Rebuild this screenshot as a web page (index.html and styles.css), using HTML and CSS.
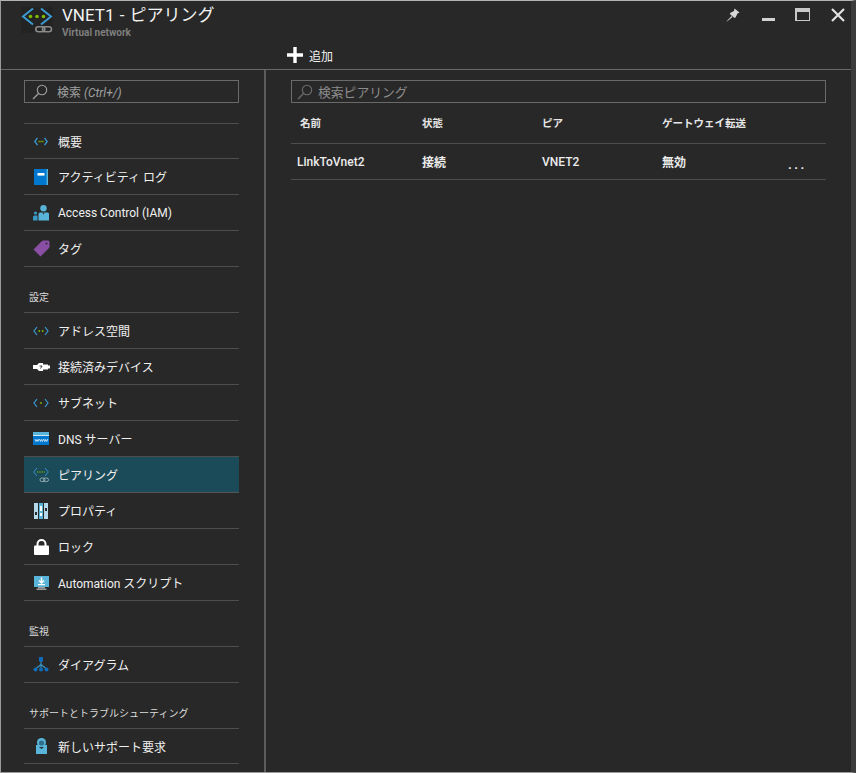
FILE: index.html
```html
<!DOCTYPE html>
<html lang="ja">
<head>
    <meta charset="UTF-8">
    <meta name="viewport" content="width=device-width, initial-scale=1.0">
    <title>VNET1 - ピアリング</title>
    <link rel="stylesheet" href="styles.css">
</head>
<body>

<div class="window">
    <header class="topbar">
        <div class="title-row">
            <div class="logo">
                <svg width="32" height="26" viewBox="0 0 32 26">
                    <path d="M12 1.5 L2 9.5 L12 17.5 M20 1.5 L30 9.5 L20 17.5" fill="none" stroke="#3b9ad2" stroke-width="2"/>
                    <circle cx="9.5" cy="9.5" r="1.8" fill="#7fba00"/>
                    <circle cx="16" cy="9.5" r="1.8" fill="#7fba00"/>
                    <circle cx="22.5" cy="9.5" r="1.8" fill="#7fba00"/>
                    <rect x="14.8" y="19.8" width="9" height="5" rx="2.5" fill="none" stroke="#8a8a8a" stroke-width="1.6"/>
                    <rect x="21.5" y="19.8" width="9" height="5" rx="2.5" fill="none" stroke="#8a8a8a" stroke-width="1.6"/>
                </svg>
            </div>
            <div class="title-text">
                <h1>VNET1 - ピアリング</h1>
                <div class="subtitle">Virtual network</div>
            </div>
            <div class="win-buttons">
                <svg class="pin" width="14" height="14" viewBox="0 0 14 14">
                    <path d="M8.5 0.5 L13.5 4.5 L11.5 5.5 L9.5 9.5 L8.5 10 L3.8 6 L4.5 4.8 L8 3 Z" fill="#d8d8d8"/>
                    <path d="M5.5 8 L0.5 13.5 L1 13.5 L6.5 9 Z" fill="#d8d8d8"/>
                </svg>
                <span class="min"></span>
                <span class="max"></span>
                <svg class="close" width="14" height="14" viewBox="0 0 14 14">
                    <path d="M1 1 L13 13 M13 1 L1 13" stroke="#e0e0e0" stroke-width="2.2"/>
                </svg>
            </div>
        </div>
        <div class="command-row">
            <svg width="16" height="16" viewBox="0 0 16 16">
                <path d="M8 0 V16 M0 8 H16" stroke="#fff" stroke-width="3.4"/>
            </svg>
            <span>追加</span>
        </div>
    </header>

    <div class="main">
        <nav class="sidebar">
            <div class="search">
                <svg width="16" height="16" viewBox="0 0 16 16">
                    <circle cx="10" cy="6" r="4.7" fill="none" stroke="#a0a0a0" stroke-width="1.1"/>
                    <path d="M6.5 9.5 L1 15" stroke="#a0a0a0" stroke-width="1.3"/>
                </svg>
                <span>検索 <i>(Ctrl+/)</i></span>
            </div>

            <ul class="menu first">
                <li>
                    <span class="icon">
                        <svg width="14" height="9" viewBox="0 0 14 9">
                            <path d="M3.5 0.8 L0.8 4.5 L3.5 8.2 M10.5 0.8 L13.2 4.5 L10.5 8.2" fill="none" stroke="#3b9ad2" stroke-width="1.3"/>
                            <path d="M4.5 4.5 H9.5" stroke="#7fba00" stroke-width="1.6" stroke-dasharray="1.2 0.7"/>
                        </svg>
                    </span>
                    概要
                </li>
                <li>
                    <span class="icon">
                        <svg width="14" height="16" viewBox="0 0 14 16">
                            <rect width="14" height="16" fill="#0078d0"/>
                            <rect x="12.6" width="1.4" height="16" fill="#59b4d9"/>
                            <rect x="3.5" y="4" width="7" height="2.6" fill="#fff"/>
                        </svg>
                    </span>
                    アクティビティ ログ
                </li>
                <li>
                    <span class="icon">
                        <svg width="16" height="16" viewBox="0 0 16 16">
                            <circle cx="10.5" cy="3.2" r="3.2" fill="#59b4d9"/>
                            <path d="M5.5 15.5 V9 Q5.5 7.5 7 7.5 H14.5 Q16 7.5 16 9 V15.5 Z" fill="#59b4d9"/>
                            <path d="M9.5 7.5 L10.5 10 L11.5 7.5 Z" fill="#2a2a2a"/>
                            <circle cx="2.5" cy="8" r="1.6" fill="#3999c6"/>
                            <path d="M0 15.5 V12 Q0 10.5 1.5 10.5 H4.5 V15.5 Z" fill="#3999c6"/>
                        </svg>
                    </span>
                    Access Control (IAM)
                </li>
                <li>
                    <span class="icon">
                        <svg width="17" height="17" viewBox="0 0 17 17">
                            <path d="M0.5 9.5 L9 1 Q9.6 0.5 10.5 0.5 H15 Q16.5 0.5 16.5 2 V6.5 Q16.5 7.4 16 8 L7.5 16.5 Z" fill="#8a4fa5"/>
                            <circle cx="13.5" cy="3.5" r="1" fill="#2a2a2a"/>
                        </svg>
                    </span>
                    タグ
                </li>
            </ul>

            <div class="section-label">設定</div>
            <ul class="menu">
                <li>
                    <span class="icon">
                        <svg width="16" height="10" viewBox="0 0 16 10">
                            <path d="M4 1 L1 5 L4 9 M12 1 L15 5 L12 9" fill="none" stroke="#3b9ad2" stroke-width="1.2"/>
                            <circle cx="6.3" cy="5" r="0.9" fill="#7fba00"/>
                            <circle cx="9.7" cy="5" r="0.9" fill="#7fba00"/>
                        </svg>
                    </span>
                    アドレス空間
                </li>
                <li>
                    <span class="icon">
                        <svg width="17" height="8" viewBox="0 0 17 8">
                            <path d="M0 2 H4 L6 0 H10 V1.5 H15 V2.5 H17 V5.5 H15 V6.5 H10 V8 H6 L4 6 H0 Z" fill="#fff"/>
                            <path d="M6.5 3 L9 3 L7.5 5.5" fill="none" stroke="#2a2a2a" stroke-width="0.9"/>
                        </svg>
                    </span>
                    接続済みデバイス
                </li>
                <li>
                    <span class="icon">
                        <svg width="16" height="10" viewBox="0 0 16 10">
                            <path d="M4 1 L1 5 L4 9 M12 1 L15 5 L12 9" fill="none" stroke="#3b9ad2" stroke-width="1.2"/>
                            <circle cx="8" cy="5" r="0.9" fill="#7fba00"/>
                        </svg>
                    </span>
                    サブネット
                </li>
                <li>
                    <span class="icon">
                        <svg width="16" height="13" viewBox="0 0 16 13">
                            <rect width="16" height="13" fill="#0078d0"/>
                            <rect y="0" width="16" height="3" fill="#59b4d9"/>
                            <rect y="3" width="16" height="1" fill="#d0e8f4"/>
                            <path d="M2 7 L3 9.5 L4 7.5 L5 9.5 L6 7 M6.5 7 L7.5 9.5 L8.5 7.5 L9.5 9.5 L10.5 7 M10.8 7 L11.8 9.5 L12.8 7.5 L13.8 9.5 L14.8 7" fill="none" stroke="#fff" stroke-width="0.7"/>
                        </svg>
                    </span>
                    DNS サーバー
                </li>
                <li class="active">
                    <span class="icon">
                        <svg width="16" height="16" viewBox="0 0 16 16">
                            <path d="M4 1 L0.7 5 L4 9 M12 1 L15.3 5 L12 9" fill="none" stroke="#3b9ad2" stroke-width="0.9"/>
                            <path d="M4 5 H12" stroke="#7fba00" stroke-width="1.2" stroke-dasharray="1.4 0.9"/>
                            <rect x="7" y="11" width="5" height="3.6" rx="1.8" fill="none" stroke="#9db4bc" stroke-width="0.9"/>
                            <rect x="10.5" y="11" width="5" height="3.6" rx="1.8" fill="none" stroke="#9db4bc" stroke-width="0.9"/>
                        </svg>
                    </span>
                    ピアリング
                </li>
                <li>
                    <span class="icon">
                        <svg width="14" height="16" viewBox="0 0 14 16">
                            <rect width="4" height="16" fill="#b3d9ea"/>
                            <rect x="5" width="4" height="16" fill="#59b4d9"/>
                            <rect x="10" width="4" height="16" fill="#b3d9ea"/>
                            <rect x="1" y="9" width="2" height="3" fill="#2a2a2a"/>
                            <rect x="6" y="3" width="2" height="5" fill="#fff"/>
                            <rect x="6" y="10" width="2" height="3" fill="#fff"/>
                            <rect x="11" y="5" width="2" height="3" fill="#2a2a2a"/>
                        </svg>
                    </span>
                    プロパティ
                </li>
                <li>
                    <span class="icon">
                        <svg width="15" height="16" viewBox="0 0 15 16">
                            <path d="M3.5 7 V5 A4 4 0 0 1 11.5 5 V7" fill="none" stroke="#fff" stroke-width="2"/>
                            <rect y="6.5" width="15" height="9.5" rx="1" fill="#fff"/>
                        </svg>
                    </span>
                    ロック
                </li>
                <li>
                    <span class="icon">
                        <svg width="15" height="14" viewBox="0 0 15 14">
                            <rect width="15" height="11" fill="#59b4d9"/>
                            <rect x="4" y="11" width="7" height="1.5" fill="#9a9a9a"/>
                            <rect x="2.5" y="12.5" width="10" height="1.5" fill="#9a9a9a"/>
                            <path d="M7.5 1.5 V6 M5 4.5 L7.5 7 L10 4.5" fill="none" stroke="#fff" stroke-width="1.5"/>
                            <rect x="4" y="8" width="7" height="1.2" fill="#fff"/>
                        </svg>
                    </span>
                    Automation スクリプト
                </li>
            </ul>

            <div class="section-label">監視</div>
            <ul class="menu">
                <li>
                    <span class="icon">
                        <svg width="16" height="15" viewBox="0 0 16 15">
                            <path d="M8 3 V12 M8 7.5 L2.5 12 M8 7.5 L13.5 12" fill="none" stroke="#3999c6" stroke-width="1.1"/>
                            <rect x="6" y="0" width="4" height="4.5" fill="#0f6cbd"/>
                            <circle cx="2.5" cy="12.5" r="2" fill="#0f6cbd"/>
                            <circle cx="8" cy="12.5" r="2" fill="#0f6cbd"/>
                            <circle cx="13.5" cy="12.5" r="2" fill="#0f6cbd"/>
                        </svg>
                    </span>
                    ダイアグラム
                </li>
            </ul>

            <div class="section-label">サポートとトラブルシューティング</div>
            <ul class="menu last">
                <li>
                    <span class="icon">
                        <svg width="11" height="16" viewBox="0 0 11 16">
                            <rect y="7" width="11" height="9" fill="#59b4d9"/>
                            <circle cx="5.5" cy="4.5" r="4.5" fill="#59b4d9"/>
                            <circle cx="5.5" cy="5" r="2.6" fill="#2f6f8c"/>
                            <path d="M3 9 L5.5 11 L8 9 Z" fill="#2a2a2a"/>
                        </svg>
                    </span>
                    新しいサポート要求
                </li>
            </ul>
        </nav>

        <section class="content">
            <div class="search search-wide">
                <svg width="16" height="16" viewBox="0 0 16 16">
                    <circle cx="10" cy="6" r="4.7" fill="none" stroke="#6e6e6e" stroke-width="1.1"/>
                    <path d="M6.5 9.5 L1 15" stroke="#6e6e6e" stroke-width="1.3"/>
                </svg>
                <span>検索ピアリング</span>
            </div>

            <table class="peerings">
                <thead>
                <tr>
                    <th class="col-name">名前</th>
                    <th class="col-state">状態</th>
                    <th class="col-peer">ピア</th>
                    <th class="col-gw">ゲートウェイ転送</th>
                    <th></th>
                </tr>
                </thead>
                <tbody>
                <tr>
                    <td class="link-name">LinkToVnet2</td>
                    <td class="strong">接続</td>
                    <td>VNET2</td>
                    <td class="strong">無効</td>
                    <td class="more">...</td>
                </tr>
                </tbody>
            </table>
        </section>
    </div>
</div>

</body>
</html>
```

FILE: styles.css
```css
html, body {
    margin: 0;
    height: 100%;
}

body {
    font-family: Roboto, "Noto Sans CJK JP", sans-serif;
    background-color: #282828;
    color: #fff;
    overflow: hidden;
}

.window {
    height: 773px;
    box-sizing: border-box;
    border-top: 1px solid #b4b4b4;
    border-left: 1px solid #9a9a9a;
    border-right: 5px solid #3c3c3c;
    border-bottom: 1px solid #9a9a9a;
    display: flex;
    flex-direction: column;
}

.topbar {
    height: 69px;
    box-sizing: border-box;
    border-bottom: 1px solid #6a6a6a;
    flex-shrink: 0;
}

.title-row {
    height: 43px;
    display: flex;
    padding-left: 20px;
    padding-right: 6px;
}

.logo {
    width: 32px;
    height: 26px;
    margin-top: 6px;
    background-color: #232323;
}

.title-text {
    margin-left: 9px;
    flex: 1;
}

h1 {
    margin: 3px 0 0;
    font-size: 17px;
    line-height: 22px;
    font-weight: 400;
    word-spacing: 1px;
    color: #f2f2f2;
}

.subtitle {
    font-size: 10px;
    line-height: 14px;
    font-weight: 700;
    color: #7e7e7e;
}

.win-buttons {
    display: flex;
    align-items: flex-start;
}

.pin {
    margin-top: 7px;
    margin-right: 22px;
}

.min {
    width: 13px;
    height: 3px;
    margin-top: 17px;
    margin-right: 20px;
    background-color: #d2d2d2;
}

.max {
    width: 12px;
    height: 8px;
    margin-top: 7px;
    margin-right: 21px;
    border: 1px solid #c8c8c8;
    border-top-width: 4px;
    border-left-width: 2px;
}

.close {
    margin-top: 7px;
}

.command-row {
    display: flex;
    align-items: center;
    height: 22px;
    padding-left: 286px;
    font-size: 12px;
    color: #f2f2f2;
}

.command-row span {
    margin-left: 6px;
}

.main {
    flex: 1;
    display: flex;
    min-height: 0;
}

.sidebar {
    width: 263px;
    flex-shrink: 0;
    border-right: 2px solid #5c5c5c;
    padding-top: 10px;
}

.search {
    height: 21px;
    margin: 0 25px 0 23px;
    border: 1px solid #6a6a6a;
    display: flex;
    align-items: center;
    padding-left: 7px;
    font-size: 12px;
    color: #a0a0a0;
}

.search svg {
    margin-right: 9px;
}

.search i {
    font-style: italic;
}

.menu {
    list-style: none;
    margin: 0 25px 0 23px;
    padding: 0;
    border-top: 1px solid #4e4e4e;
}

.menu.first {
    margin-top: 20px;
}

.menu li {
    height: 35px;
    border-bottom: 1px solid #4e4e4e;
    display: flex;
    align-items: center;
    font-size: 12px;
    color: #f0f0f0;
}

.menu.first li:first-child,
.menu.last li {
    height: 34px;
}

.menu li.active {
    background-color: #1b4a58;
    border-bottom-color: #555;
}

.icon {
    width: 34px;
    display: flex;
    justify-content: center;
    flex-shrink: 0;
}

.section-label {
    height: 45px;
    box-sizing: border-box;
    padding: 24px 0 0 28px;
    font-size: 10px;
    line-height: 14px;
    color: #dcdcdc;
}

.content {
    flex: 1;
    padding: 10px 25px 0;
    min-width: 0;
}

.search-wide {
    margin: 0;
    color: #8c8c8c;
    font-size: 12.8px;
    padding-left: 5px;
}

.search-wide svg {
    margin-right: 5px;
}

.peerings {
    width: 100%;
    border-collapse: collapse;
    table-layout: fixed;
}

.peerings th {
    height: 38px;
    padding: 0 0 2px 9px;
    text-align: left;
    font-size: 10.5px;
    font-weight: 700;
    color: #e6e6e6;
    border-bottom: 1px solid #4e4e4e;
}

.peerings td {
    height: 35px;
    padding: 0 0 0 9px;
    font-size: 12px;
    font-weight: 500;
    color: #ececec;
    border-bottom: 1px solid #4e4e4e;
}

.peerings td.strong {
    font-weight: 700;
}

.col-name {
    width: 113px;
}

.col-state {
    width: 111px;
}

.col-peer {
    width: 111px;
}

.col-gw {
    width: 116px;
}

.peerings td.link-name {
    padding-left: 6px;
}

.peerings td.more {
    height: 29px;
    padding-left: 10px;
    padding-top: 6px;
    font-size: 13px;
    line-height: 14px;
    letter-spacing: 2.5px;
    font-weight: 700;
}
```
